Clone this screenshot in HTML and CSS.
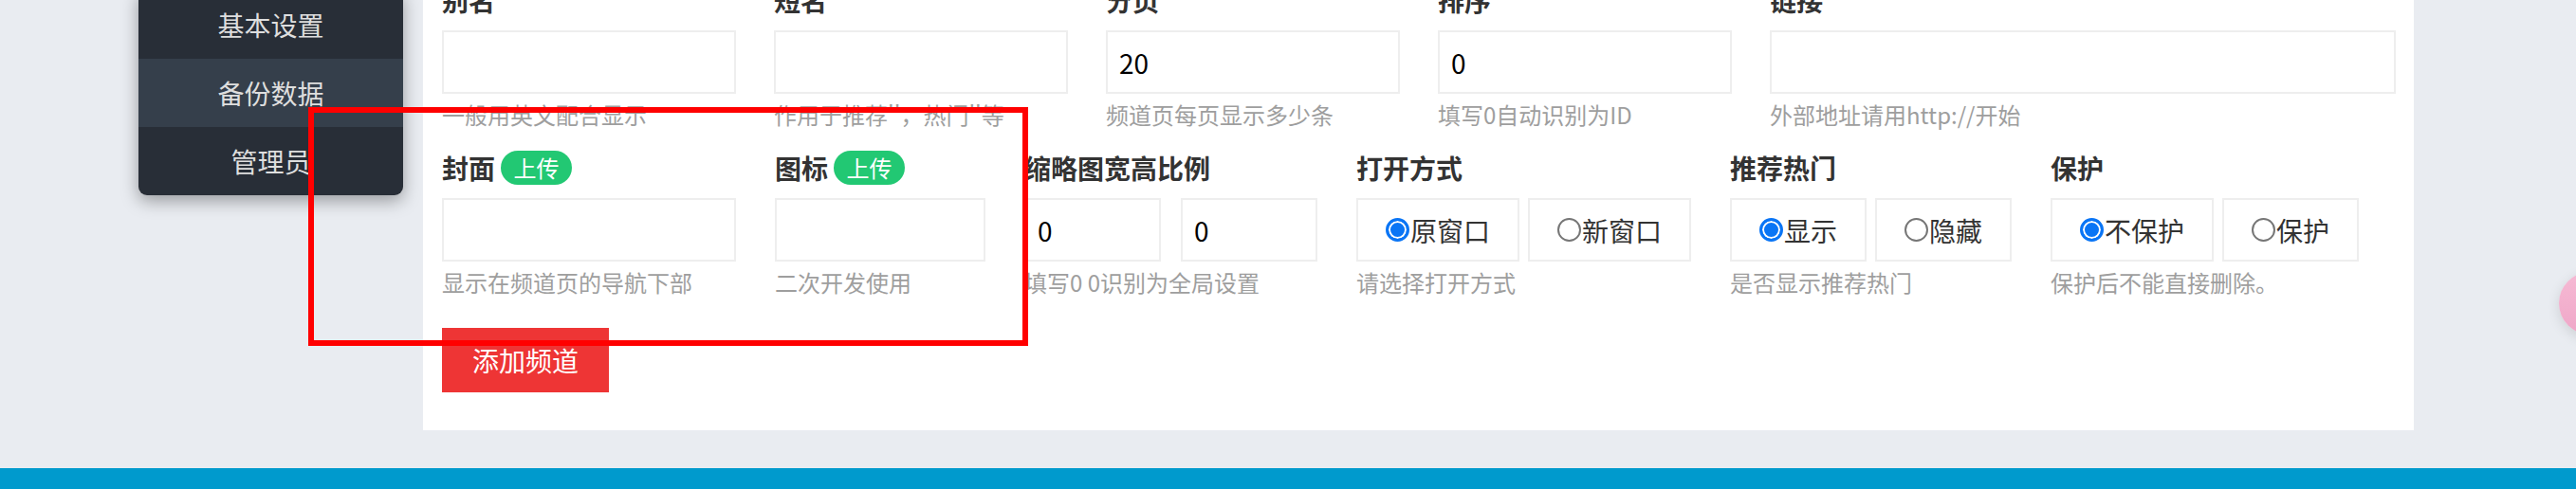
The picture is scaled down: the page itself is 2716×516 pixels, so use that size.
FILE: index.html
```html
<!DOCTYPE html>
<html lang="zh-CN">
<head>
<meta charset="utf-8">
<title>添加频道</title>
<link rel="stylesheet" href="styles.css">
</head>
<body>
<div class="page">
  <div class="layout">
    <div class="gutter"></div>
    <main class="panel">
      <div class="row row1">
        <div class="field w310">
          <div class="label">别名</div>
          <input class="inp" type="text" value="">
          <div class="hint">一般用英文配合显示</div>
        </div>
        <div class="field w310">
          <div class="label">短名</div>
          <input class="inp" type="text" value="">
          <div class="hint">作用于推荐''，热门''等</div>
        </div>
        <div class="field w310">
          <div class="label">分页</div>
          <input class="inp" type="text" value="20">
          <div class="hint">频道页每页显示多少条</div>
        </div>
        <div class="field w310">
          <div class="label">排序</div>
          <input class="inp" type="text" value="0">
          <div class="hint">填写0自动识别为ID</div>
        </div>
        <div class="field w660">
          <div class="label">链接</div>
          <input class="inp" type="text" value="">
          <div class="hint">外部地址请用http://开始</div>
        </div>
      </div>

      <div class="row row2">
        <div class="field w310">
          <div class="label">封面 <span class="badge">上传</span></div>
          <input class="inp" type="text" value="">
          <div class="hint">显示在频道页的导航下部</div>
        </div>
        <div class="field w222">
          <div class="label">图标 <span class="badge">上传</span></div>
          <input class="inp" type="text" value="">
          <div class="hint">二次开发使用</div>
        </div>
        <div class="field">
          <div class="label">缩略图宽高比例</div>
          <div class="pair">
            <input class="inp w144" type="text" value="0">
            <input class="inp w144" type="text" value="0">
          </div>
          <div class="hint">填写0 0识别为全局设置</div>
        </div>
        <div class="field">
          <div class="label">打开方式</div>
          <div class="choices">
            <label class="choice"><input class="radio" type="radio" name="open" checked>原窗口</label>
            <label class="choice"><input class="radio" type="radio" name="open">新窗口</label>
          </div>
          <div class="hint">请选择打开方式</div>
        </div>
        <div class="field">
          <div class="label">推荐热门</div>
          <div class="choices">
            <label class="choice"><input class="radio" type="radio" name="hot" checked>显示</label>
            <label class="choice"><input class="radio" type="radio" name="hot">隐藏</label>
          </div>
          <div class="hint">是否显示推荐热门</div>
        </div>
        <div class="field">
          <div class="label">保护</div>
          <div class="choices">
            <label class="choice"><input class="radio" type="radio" name="protect" checked>不保护</label>
            <label class="choice"><input class="radio" type="radio" name="protect">保护</label>
          </div>
          <div class="hint">保护后不能直接删除。</div>
        </div>
      </div>

      <button class="submit" type="button">添加频道</button>
    </main>
  </div>
  <div class="footer"></div>

  <nav class="menu">
    <div class="menu-item">基本设置</div>
    <div class="menu-item active">备份数据</div>
    <div class="menu-item">管理员</div>
  </nav>

  <div class="mark"></div>
  <div class="bubble"></div>
</div>
</body>
</html>
```

FILE: styles.css
```css
* { box-sizing: border-box; }

html, body {
  margin: 0;
  padding: 0;
  background: #e9ecf1;
  font-family: "Noto Sans CJK SC", "Noto Sans", sans-serif;
  color: #333;
}

.page {
  position: relative;
  width: 2716px;
  height: 516px;
  overflow: hidden;
}

.layout {
  display: flex;
  margin-top: -40px;
}

.gutter {
  width: 446px;
  flex: none;
}

.panel {
  width: 2099px;
  flex: none;
  background: #fff;
  padding: 20px 20px 40px;
}

.row {
  display: flex;
}

.row1 { column-gap: 40px; }
.row2 { column-gap: 41px; margin-top: 16px; }

.field {
  display: flex;
  flex-direction: column;
  flex: none;
}

.w310 { width: 310px; }
.w660 { width: 660px; }
.w222 { width: 222px; }

.label {
  height: 40px;
  line-height: 40px;
  font-size: 28px;
  font-weight: 700;
  color: #333;
  margin-bottom: 12px;
  white-space: nowrap;
  display: flex;
  align-items: center;
  gap: 6px;
}

.badge {
  display: inline-flex;
  align-items: center;
  justify-content: center;
  width: 75px;
  height: 36px;
  border-radius: 18px;
  background: #22c873;
  color: #fff;
  font-size: 24px;
  font-weight: 400;
  line-height: 36px;
}

.inp {
  display: block;
  width: 100%;
  height: 67px;
  margin: 0;
  border: 2px solid #eeeeee;
  padding: 0 12px;
  font-family: "Noto Sans CJK SC", "Noto Sans", sans-serif;
  font-size: 28px;
  color: #000;
  background: #fff;
  outline: none;
}

.pair {
  display: flex;
  gap: 21px;
}

.inp.w144 { width: 144px; }

.choices {
  display: flex;
  gap: 9px;
}

.choice {
  display: flex;
  align-items: center;
  justify-content: center;
  height: 67px;
  padding: 0 29px;
  border: 2px solid #eeeeee;
  font-size: 28px;
  color: #333;
  white-space: nowrap;
}

.radio {
  appearance: none;
  -webkit-appearance: none;
  flex: none;
  width: 25px;
  height: 25px;
  margin: 0 1px 0 0;
  border: 2px solid #767676;
  border-radius: 50%;
  background: #fff;
}

.radio:checked {
  border: 3px solid #0a75f5;
  background: #0a75f5;
  box-shadow: inset 0 0 0 2px #fff;
}

.hint {
  margin-top: 2px;
  height: 40px;
  line-height: 40px;
  font-size: 24px;
  color: #9e9e9e;
  white-space: nowrap;
}

.submit {
  display: block;
  margin-top: 28px;
  width: 176px;
  height: 68px;
  border: none;
  background: #ee3535;
  color: #fff;
  font-family: "Noto Sans CJK SC", "Noto Sans", sans-serif;
  font-size: 28px;
  padding: 0;
}

.footer {
  margin-top: 40px;
  height: 40px;
  background: #009acd;
}

.menu {
  position: absolute;
  left: 146px;
  top: -10px;
  width: 279px;
  background: #282e37;
  border-radius: 0 0 9px 9px;
  box-shadow: 0 6px 18px rgba(0, 0, 0, 0.35);
  overflow: hidden;
}

.menu-item {
  height: 72px;
  line-height: 72px;
  text-align: center;
  font-size: 28px;
  color: #dedede;
}

.menu-item.active {
  background: #353f4b;
}

.mark {
  position: absolute;
  left: 325px;
  top: 113px;
  width: 759px;
  height: 252px;
  border: 6px solid #ff0000;
}

.bubble {
  position: absolute;
  left: 2698px;
  top: 287px;
  width: 66px;
  height: 66px;
  border-radius: 50%;
  background: linear-gradient(180deg, #f6bad4 0%, #efa7c8 100%);
  box-shadow: 0 4px 14px rgba(0, 0, 0, 0.12);
}
```
